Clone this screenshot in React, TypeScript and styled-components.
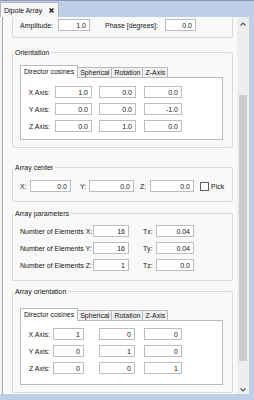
import * as React from 'react'
import styled, { createGlobalStyle } from 'styled-components'

const GlobalStyle = createGlobalStyle`
	html, body {
		margin: 0;
		padding: 0;
	}
	body {
		font-family: 'Liberation Sans', Arial, sans-serif;
		font-size: 7px;
		color: #141414;
	}
`

const Window = styled.div`
	width: 254px;
	height: 400px;
	box-sizing: border-box;
	display: flex;
	flex-direction: column;
	overflow: hidden;
	padding: 0 5px 6px 0;

	background: #bccfe7;
	border-top: 1px solid #8b9ab0;
`

const TabStrip = styled.div`
	height: 16px;
	display: flex;
	align-items: flex-end;
`

const DockTab = styled.div`
	width: 59px;
	height: 15px;
	box-sizing: border-box;
	display: flex;
	align-items: center;
	justify-content: space-between;
	padding: 0 4px 0 3px;

	background: #f5f5f5;
	border: 1px solid #a9b5c6;
	border-bottom: none;
`

const Dock = styled.div`
	flex: 1;
	min-height: 0;
	display: flex;
	padding-left: 2px;
	background: #f5f5f5;
`

const Viewport = styled.div`
	flex: 1;
	min-width: 0;
	overflow: hidden;
	padding: 0 4px 0 9px;

	background: #f9f9f9;
	border-left: 1px solid #a3a3a3;
`

type GroupProps = { $mt: number; $pt: number; $pb: number; $open?: boolean }
const Group = styled.fieldset<GroupProps>`
	min-width: 0;
	margin: ${p => p.$mt}px 0 0;
	padding: ${p => p.$pt}px 9px ${p => p.$pb}px 7px;

	border: 1px solid #d9d9d9;
	border-top: ${p => (p.$open ? 'none' : '1px solid #d9d9d9')};
	border-radius: 2px;
`

const Legend = styled.legend`
	margin-left: -7px;
	padding: 0 2px;
	font-size: 7px;
	line-height: 9px;
`

type RowProps = { $gap?: number }
const Row = styled.div<RowProps>`
	height: 12px;
	display: flex;
	align-items: center;

	& + & {
		margin-top: ${p => p.$gap ?? 5}px;
	}
`

type LabelProps = { $w: number; $ml?: number; $right?: boolean }
const Label = styled.span<LabelProps>`
	flex: none;
	width: ${p => p.$w}px;
	margin-left: ${p => p.$ml ?? 0}px;
	text-align: ${p => (p.$right ? 'right' : 'left')};
	white-space: nowrap;
`

type FieldProps = { $w: number; $ml?: number }
const Field = styled.input<FieldProps>`
	flex: none;
	width: ${p => p.$w}px;
	height: 12px;
	box-sizing: border-box;
	margin: 0 0 0 ${p => p.$ml ?? 0}px;
	padding: 0 3px 0 0;

	font-family: inherit;
	font-size: 7px;
	color: #141414;
	text-align: right;
	background: #fff;
	border: 1px solid #bdbdbd;
	border-radius: 0;
	outline: none;
`

const CheckBox = styled.span`
	flex: none;
	width: 9px;
	height: 9px;
	box-sizing: border-box;
	margin-left: 6px;
	background: #fff;
	border: 1px solid #5f5f5f;
`

const TabBar = styled.div`
	position: relative;
	z-index: 1;
	height: 13px;
	display: flex;
	align-items: flex-end;
	margin-bottom: -1px;
`

type TabProps = { $active?: boolean }
const Tab = styled.div<TabProps>`
	height: ${p => (p.$active ? 13 : 11)}px;
	box-sizing: border-box;
	display: flex;
	align-items: center;
	padding: 0 ${p => (p.$active ? 3 : 2)}px;
	white-space: nowrap;

	background: ${p => (p.$active ? '#fff' : '#f0f0f0')};
	border: 1px solid #b9b9b9;
	border-bottom: ${p => (p.$active ? '1px solid #fff' : '1px solid #b9b9b9')};

	& + & {
		margin-left: -1px;
	}
`

type PaneProps = { $pt: number; $pb: number }
const Pane = styled.div<PaneProps>`
	padding: ${p => p.$pt}px 0 ${p => p.$pb}px 0;
	background: #fff;
	border: 1px solid #b9b9b9;
`

const ScrollBar = styled.div`
	width: 12px;
	display: flex;
	flex-direction: column;
	background: #eeeeee;
`

type ArrowProps = { $h: number }
const Arrow = styled.div<ArrowProps>`
	height: ${p => p.$h}px;
	display: flex;
	align-items: center;
	justify-content: center;
`

const Track = styled.div`
	flex: 1;
	padding: 64px 2px 0;
`

const Thumb = styled.div`
	height: 266px;
	background: #cdcdcd;
`

const Chevron = ({ up }: { up?: boolean }) => (
	<svg width="6" height="4" viewBox="0 0 6 4">
		<polyline
			points={up ? '0.5,3.5 3,1 5.5,3.5' : '0.5,0.5 3,3 5.5,0.5'}
			fill="none"
			stroke="#555"
			strokeWidth="1.2"
		/>
	</svg>
)

const CloseIcon = () => (
	<svg width="5" height="5" viewBox="0 0 5 5">
		<path d="M0.5 0.5 L4.5 4.5 M4.5 0.5 L0.5 4.5" stroke="#1b1b1b" strokeWidth="1.4" />
	</svg>
)

type Col = { value: string; w: number; ml: number }

const AxisTabs = ({ rows, pt, pb }: { rows: [string, Col[]][]; pt: number; pb: number }) => (
	<div>
		<TabBar>
			<Tab $active>Director cosines</Tab>
			<Tab>Spherical</Tab>
			<Tab>Rotation</Tab>
			<Tab>Z-Axis</Tab>
		</TabBar>
		<Pane $pt={pt} $pb={pb}>
			{rows.map(([name, cols]) => (
				<Row key={name}>
					<Label $w={29} $right>
						{name}
					</Label>
					{cols.map((c, i) => (
						<Field key={i} $w={c.w} $ml={c.ml} readOnly value={c.value} />
					))}
				</Row>
			))}
		</Pane>
	</div>
)

const col = (value: string, w: number, ml: number): Col => ({ value, w, ml })

const orientation: [string, Col[]][] = [
	['X Axis:', [col('1.0', 37, 5), col('0.0', 37, 7), col('0.0', 38, 8)]],
	['Y Axis:', [col('0.0', 37, 5), col('0.0', 37, 7), col('-1.0', 38, 8)]],
	['Z Axis:', [col('0.0', 37, 5), col('1.0', 37, 7), col('0.0', 38, 8)]],
]

const arrayOrientation: [string, Col[]][] = [
	['X Axis:', [col('1', 31, 3), col('0', 36, 15), col('0', 38, 9)]],
	['Y Axis:', [col('0', 31, 3), col('1', 36, 15), col('0', 38, 9)]],
	['Z Axis:', [col('0', 31, 3), col('0', 36, 15), col('1', 38, 9)]],
]

const elements = [
	['Number of Elements X:', '16', 'Tx:', '0.04'],
	['Number of Elements Y:', '16', 'Ty:', '0.04'],
	['Number of Elements Z:', '1', 'Tz:', '0.0'],
]

export default function App() {
	return (
		<>
			<GlobalStyle />
			<Window>
				<TabStrip>
					<DockTab>
						<span>Dipole Array</span>
						<CloseIcon />
					</DockTab>
				</TabStrip>
				<Dock>
					<Viewport>
						<Group $open $mt={0} $pt={2} $pb={6}>
							<Row>
								<Label $w={38}>Amplitude:</Label>
								<Field $w={32} readOnly value="1.0" />
								<Label $w={60} $ml={15}>
									Phase [degrees]:
								</Label>
								<Field $w={31} readOnly value="0.0" />
							</Row>
						</Group>

						<Group $mt={10} $pt={8} $pb={7}>
							<Legend>Orientation</Legend>
							<AxisTabs rows={orientation} pt={8} pb={7} />
						</Group>

						<Group $mt={15} $pt={8} $pb={9}>
							<Legend>Array center</Legend>
							<Row>
								<Label $w={10}>X:</Label>
								<Field $w={41} readOnly value="0.0" />
								<Label $w={9} $ml={9}>
									Y:
								</Label>
								<Field $w={45} readOnly value="0.0" />
								<Label $w={10} $ml={6}>
									Z:
								</Label>
								<Field $w={44} readOnly value="0.0" />
								<CheckBox />
								<Label $w={20} $ml={2}>
									Pick
								</Label>
							</Row>
						</Group>

						<Group $mt={7} $pt={7} $pb={9}>
							<Legend>Array parameters</Legend>
							{elements.map(([name, n, t, tv]) => (
								<Row key={name}>
									<Label $w={73}>{name}</Label>
									<Field $w={36} readOnly value={n} />
									<Label $w={13} $ml={14}>
										{t}
									</Label>
									<Field $w={38} readOnly value={tv} />
								</Row>
							))}
						</Group>

						<Group $mt={6} $pt={12} $pb={7}>
							<Legend>Array orientation</Legend>
							<AxisTabs rows={arrayOrientation} pt={7} pb={10} />
						</Group>
					</Viewport>
					<ScrollBar>
						<Arrow $h={14}>
							<Chevron up />
						</Arrow>
						<Track>
							<Thumb />
						</Track>
						<Arrow $h={8}>
							<Chevron />
						</Arrow>
					</ScrollBar>
				</Dock>
			</Window>
		</>
	)
}
